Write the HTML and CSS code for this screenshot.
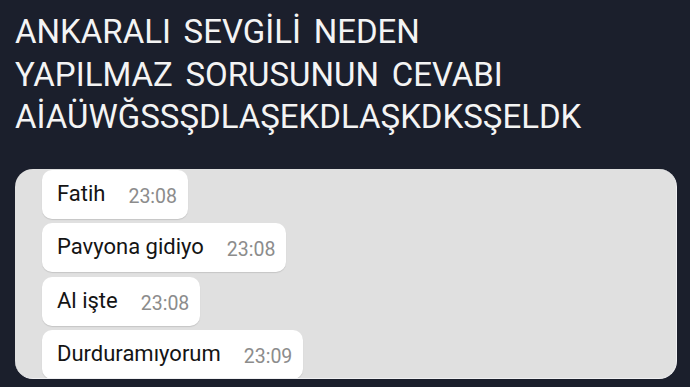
FILE: index.html
```html
<!DOCTYPE html>
<html lang="tr">
<head>
    <meta charset="UTF-8">
    <title>Ankaralı sevgili</title>
    <link rel="stylesheet" href="styles.css">
</head>
<body>
    <div class="page">
        <h1 class="title">ANKARALI SEVGİLİ NEDEN<br>YAPILMAZ SORUSUNUN CEVABI<br>AİAÜWĞSSŞDLAŞEKDLAŞKDKSŞELDK</h1>

        <!-- sohbet ekran görüntüsü -->
        <div class="chat">
            <div class="bubble">Fatih<span class="time">23:08</span></div>
            <div class="bubble">Pavyona gidiyo<span class="time">23:08</span></div>
            <div class="bubble">Al işte<span class="time">23:08</span></div>
            <div class="bubble">Durduramıyorum<span class="time">23:09</span></div>
        </div>
    </div>
</body>
</html>
```

FILE: styles.css
```css
body {
    margin: 0;
    padding: 0;
    background: #1b1f2c;
    font-family: Roboto, "Liberation Sans", Arial, sans-serif;
}
.page {
    padding: 11px 13px 9px 15px;
}
.title {
    margin: 0 0 30px 0;
    font-size: 33px;
    font-weight: normal;
    line-height: 42.5px;
    word-spacing: 4.5px;
    color: #f4f4f4;
    white-space: nowrap;
}
.chat {
    height: 210px;
    box-sizing: border-box;
    background: #e0e0e0;
    border-radius: 18px;
    border-bottom: 1px solid #f0f0f2;
    border-right: 1px solid #f0f0f2;
    padding: 1px 0 0 27px;
    overflow: hidden;
    display: flex;
    flex-direction: column;
    gap: 4.5px;
}
.bubble {
    width: fit-content;
    height: 49px;
    box-sizing: border-box;
    padding: 7px 11px 8px 15px;
    background: #fff;
    border-radius: 10px;
    box-shadow: 0 1px 1px rgba(0, 0, 0, 0.12);
    font-size: 22px;
    line-height: 34px;
    color: #141414;
    white-space: nowrap;
}
.time {
    margin-left: 23px;
    font-size: 19.5px;
    line-height: 20px;
    vertical-align: -2px;
    color: #8c8c8c;
}
```
